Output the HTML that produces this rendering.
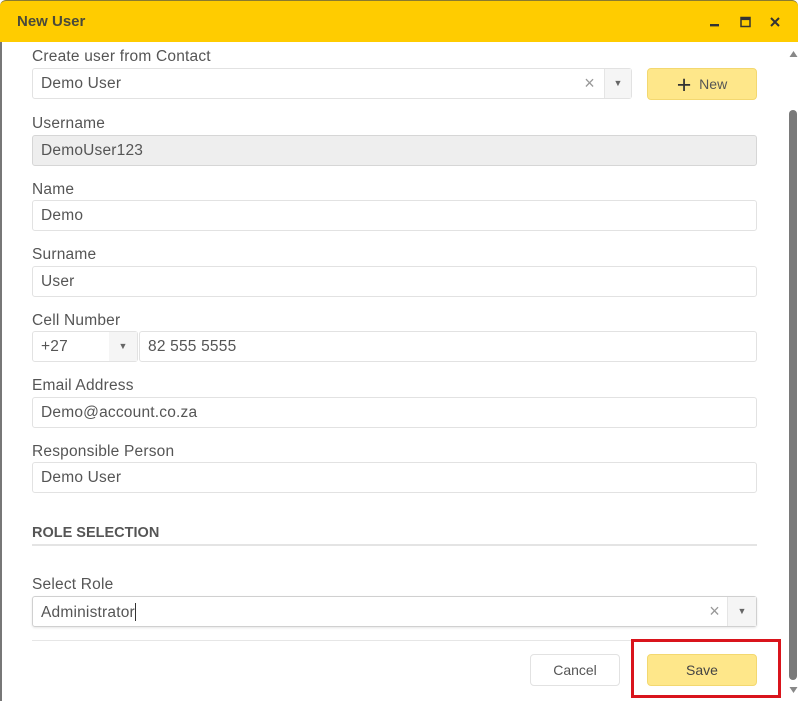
<!DOCTYPE html>
<html><head><meta charset="utf-8"><style>
*{box-sizing:border-box;margin:0;padding:0}
body{width:798px;height:701px;background:#fff;font-family:"Liberation Sans",sans-serif;position:relative;overflow:hidden;color:#555}
.hdr{position:absolute;left:0;top:0;width:798px;height:42px;background:#ffcc00;border-radius:6px 6px 0 0;border-top:1px solid #8a7a30}
.hdr .t{position:absolute;left:17px;top:12px;font-size:15px;font-weight:bold;color:#4a4a3a}
.lb{position:absolute;left:0;top:42px;width:2px;height:659px;background:#777}
.lbl{position:absolute;left:32px;font-size:15.5px;color:#555;letter-spacing:.2px}
.inp{position:absolute;left:32px;width:725px;height:31px;border:1px solid #e2e2e2;border-radius:3px;font-size:15.5px;padding:6px 8px;color:#555;letter-spacing:.2px}
.btn{position:absolute;border-radius:4px;font-size:14px;text-align:center;color:#555}
.sb{position:absolute;left:789px;top:110px;width:8px;height:570px;background:#7a7a7a;border-radius:4px}
</style></head><body>
<div class="hdr"><div class="t">New User</div>
<svg style="position:absolute;left:705px;top:14px" width="80" height="16">
<rect x="5" y="9" width="9" height="2.4" fill="#333"/>
<rect x="36" y="2.5" width="9" height="9" fill="none" stroke="#333" stroke-width="1.5"/><rect x="36" y="2.5" width="9" height="2.6" fill="#333"/>
<path d="M66 3 L74 11 M74 3 L66 11" stroke="#333" stroke-width="2"/>
</svg></div>
<div class="lb"></div>
<svg style="position:absolute;left:789px;top:50px" width="9" height="8"><path d="M0.5 7 L4.5 1 L8.5 7Z" fill="#888"/></svg>
<div class="sb"></div>
<svg style="position:absolute;left:789px;top:686px" width="9" height="8"><path d="M0.5 1 L4.5 7 L8.5 1Z" fill="#888"/></svg>

<div class="lbl" style="top:48px">Create user from Contact</div>
<div class="inp" style="top:68px;width:600px">Demo User
<span style="position:absolute;right:36px;top:4px;color:#999;font-size:18px">×</span>
<span style="position:absolute;right:0;top:0;width:27px;height:29px;background:#f5f5f5;border-left:1px solid #e5e5e5;font-size:9px;color:#666;text-align:center;line-height:29px">▼</span></div>
<div class="btn" style="left:647px;top:68px;width:110px;height:32px;background:#fee78a;border:1px solid #f3d870;line-height:30px"><span style="font-size:25px;vertical-align:-4px;color:#333">+</span>&nbsp; New</div>

<div class="lbl" style="top:115px">Username</div>
<div class="inp" style="top:135px;background:#eeeeee;border-color:#d6d6d6">DemoUser123</div>
<div class="lbl" style="top:181px">Name</div>
<div class="inp" style="top:200px">Demo</div>
<div class="lbl" style="top:246px">Surname</div>
<div class="inp" style="top:266px">User</div>
<div class="lbl" style="top:312px">Cell Number</div>
<div class="inp" style="top:331px;width:106px">+27<span style="position:absolute;right:0;top:0;width:28px;height:29px;background:#f5f5f5;font-size:9px;color:#666;text-align:center;line-height:29px">▼</span></div>
<div class="inp" style="top:331px;left:139px;width:618px">82 555 5555</div>
<div class="lbl" style="top:377px">Email Address</div>
<div class="inp" style="top:397px">Demo@account.co.za</div>
<div class="lbl" style="top:443px">Responsible Person</div>
<div class="inp" style="top:462px">Demo User</div>

<div style="position:absolute;left:32px;top:525px;font-size:14.5px;font-weight:bold;color:#555">ROLE SELECTION</div>
<div style="position:absolute;left:32px;top:544px;width:725px;height:2px;background:#e4e4e4"></div>
<div class="lbl" style="top:576px">Select Role</div>
<div class="inp" style="top:596px;border-color:#d0d0d0;box-shadow:0 1px 2px rgba(0,0,0,.1)">Administrator<span style="display:inline-block;width:1px;height:18px;background:#333;vertical-align:-4px"></span>
<span style="position:absolute;right:36px;top:4px;color:#999;font-size:18px">×</span>
<span style="position:absolute;right:0;top:0;width:29px;height:29px;background:#f5f5f5;border-left:1px solid #e5e5e5;font-size:9px;color:#666;text-align:center;line-height:29px">▼</span></div>
<div style="position:absolute;left:32px;top:640px;width:725px;height:1px;background:#e6e6e6"></div>

<div class="btn" style="left:530px;top:654px;width:90px;height:32px;border:1px solid #e2e2e2;line-height:30px">Cancel</div>
<div class="btn" style="left:647px;top:654px;width:110px;height:32px;background:#fee78a;border:1px solid #f3d870;line-height:30px;color:#444">Save</div>
<div style="position:absolute;left:631px;top:639px;width:150px;height:59px;border:3px solid #d9141c"></div>
</body></html>
